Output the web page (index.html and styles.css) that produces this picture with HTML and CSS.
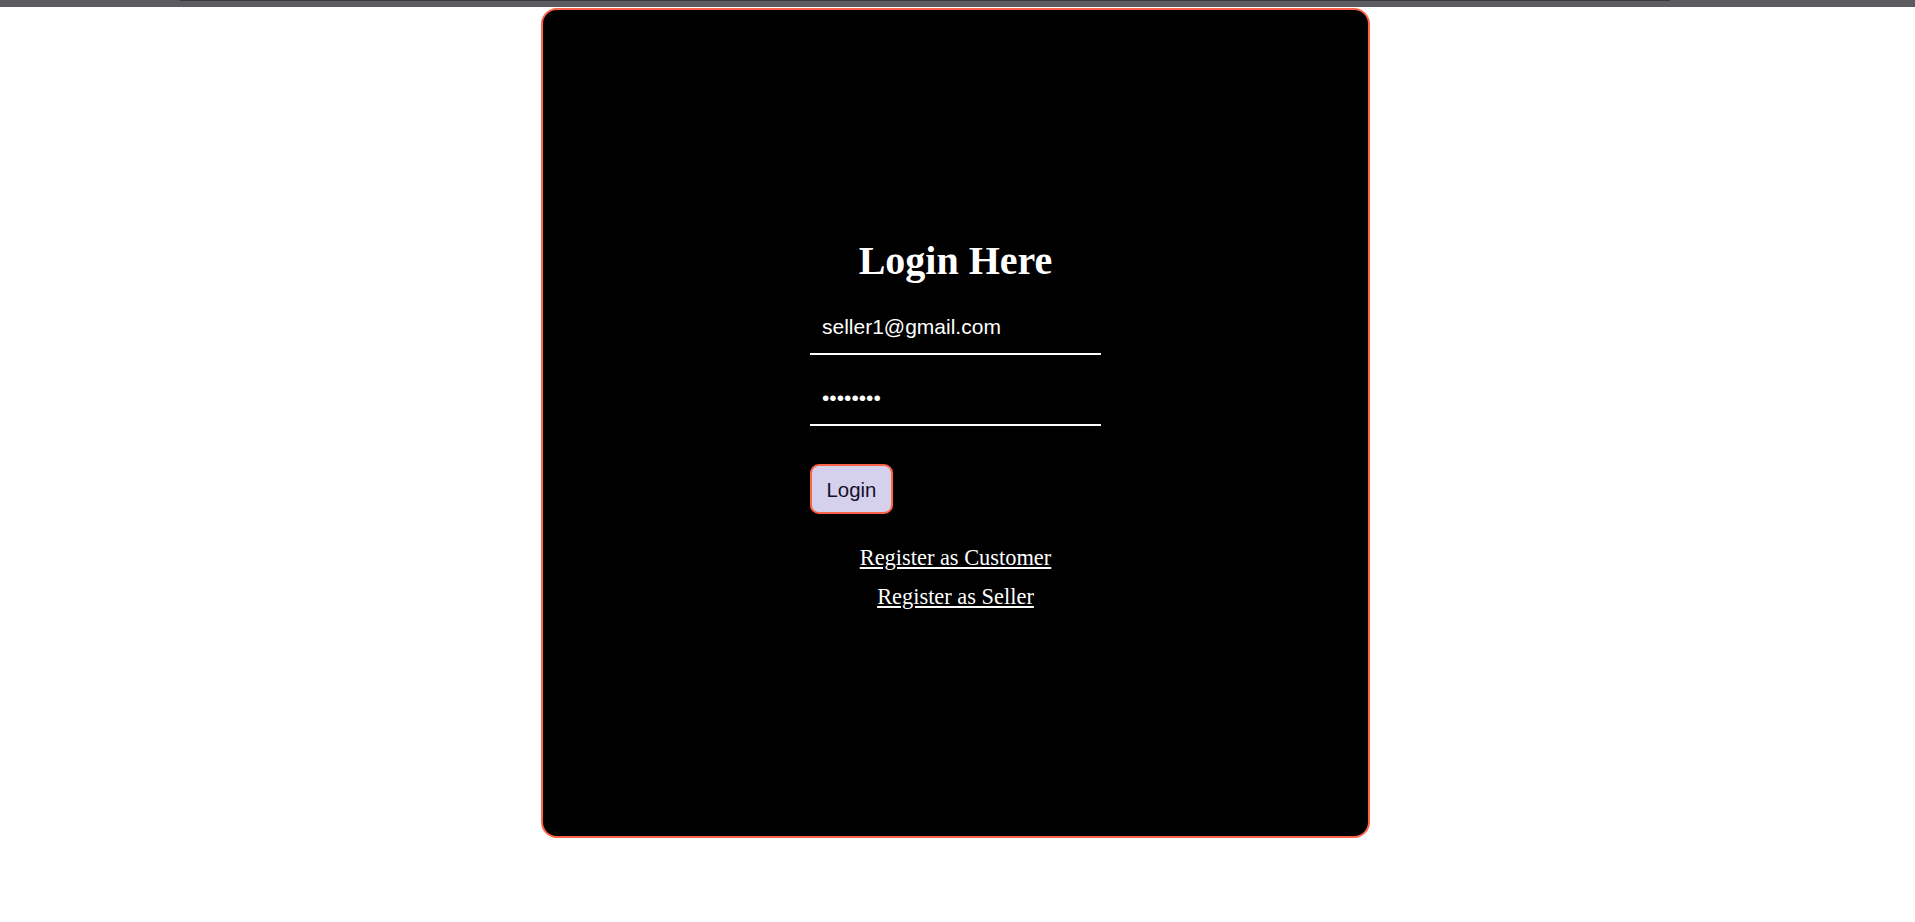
FILE: index.html
```html
<!DOCTYPE html>
<html lang="en">
<head>
<meta charset="utf-8">
<title>Login</title>
<link rel="stylesheet" href="styles.css">
</head>
<body>
<div class="topbar"><div class="topbar-line"></div></div>
<div class="page">
  <div class="card">
    <form class="login-form" onsubmit="return false;">
      <h2 class="title">Login Here</h2>
      <input class="field" type="email" value="seller1@gmail.com">
      <input class="field field-pass" type="password" value="12345678">
      <div class="btn-row"><button class="login-btn" type="submit">Login</button></div>
      <a class="reg-link first" href="#">Register as Customer</a>
      <a class="reg-link" href="#">Register as Seller</a>
    </form>
  </div>
</div>
</body>
</html>
```

FILE: styles.css
```css
html, body {
  margin: 0;
  padding: 0;
  background: #ffffff;
}

body {
  font-family: "Liberation Serif", "Times New Roman", serif;
}

.topbar {
  height: 7px;
  background: #5b5b60;
  display: flex;
  justify-content: center;
  padding-right: 66px;
}

.topbar-line {
  width: 1490px;
  height: 1px;
  background: #3b3b3f;
}

.page {
  display: flex;
  justify-content: center;
  padding-top: 1px;
  padding-right: 4px;
}

.card {
  box-sizing: border-box;
  width: 829px;
  height: 830px;
  background: #000000;
  border: 2px solid #ff6347;
  border-radius: 16px;
  display: flex;
  align-items: center;
  justify-content: center;
}

.login-form {
  width: 291px;
  display: flex;
  flex-direction: column;
  align-items: stretch;
  margin-bottom: 1px;
}

.title {
  margin: 2px 0 17px;
  font-family: "Liberation Serif", "Times New Roman", serif;
  font-size: 40px;
  font-weight: bold;
  color: #ffffff;
  text-align: center;
  line-height: normal;
}

.field {
  box-sizing: border-box;
  width: 100%;
  height: 54px;
  margin: 0;
  padding: 14px 12px;
  background: transparent;
  border: none;
  border-bottom: 2px solid #ffffff;
  outline: none;
  color: #ffffff;
  font-family: "Liberation Sans", Arial, sans-serif;
  font-size: 21px;
}

.field-pass {
  margin-top: 17px;
}

.btn-row {
  display: flex;
  margin-top: 38px;
}

.login-btn {
  box-sizing: border-box;
  height: 50px;
  padding: 3px 14.5px 0;
  background: #d5d0ec;
  border: 2px solid #ff6347;
  border-radius: 9px;
  color: #14102a;
  font-family: "Liberation Sans", Arial, sans-serif;
  font-size: 20.4px;
  cursor: pointer;
}

.reg-link {
  display: block;
  text-align: center;
  color: #ffffff;
  font-family: "Liberation Serif", "Times New Roman", serif;
  font-size: 22.4px;
  line-height: normal;
  text-decoration: underline;
  margin-top: 12.8px;
}

.reg-link.first {
  margin-top: 31.4px;
}
```
